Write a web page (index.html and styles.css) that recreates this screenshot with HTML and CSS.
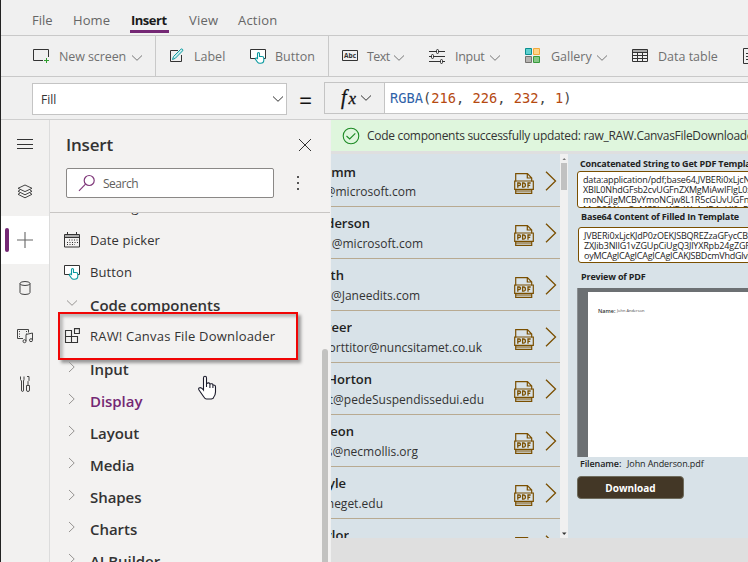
FILE: index.html
```html
<!DOCTYPE html>
<html lang="en">
<head>
<meta charset="utf-8">
<title>Power Apps Studio</title>
<link rel="stylesheet" href="styles.css">
</head>
<body>
<svg class="defs" width="0" height="0">
  <symbol id="down" viewBox="0 0 12 8"><path d="M1 1.5 L6 6.3 L11 1.5" fill="none" stroke="currentColor"/></symbol>
  <symbol id="right" viewBox="0 0 8 12"><path d="M1 1 L6.2 6 L1 11" fill="none" stroke="currentColor"/></symbol>
  <symbol id="tap" viewBox="0 0 18 16">
    <path d="M1.500 1.500 H16.500 V10.500 H1.500 Z" fill="#fff" stroke="#333"/>
    <path d="M8.500 10.500 V5.500 q0-1 1-1 t1 1 V8.500 H13 q1.800 0 1.800 1.800 V12 q0 3.300-3.300 3.300 H10.800 q-1.600 0-2.400-1.300 L6.300 11 q0-1.300 1.200-1 Z" fill="#fff" stroke="#0b9aa0" stroke-width="1.100"/>
  </symbol>
  <symbol id="pdf" viewBox="0 0 20 21">
    <path d="M1.700 8.500 V.7 H13.500 L17.700 5 V8.500 M13.300 1 V5 H17.700 M1.700 16.500 V20.300 H17.700 V16.500" fill="none" stroke="#7a4f00" stroke-width="1.200"/>
    <path d="M.7 8 H19.300 V16.300 H.7 Z M2 18 H17.500" fill="none" stroke="#7a4f00" stroke-width="1.200"/>
    <path d="M3.800 14.800 V10 H5.200 Q6.500 10 6.500 11.300 T5.200 12.600 H4 M8.600 14.200 V10 H9.400 Q11.400 10 11.400 12.100 T9.400 14.200 Z M14 14.800 V10 H16.700 M14 12.300 H16.200" fill="none" stroke="#7a4f00" stroke-width="1.300"/>
  </symbol>
  <symbol id="next" viewBox="0 0 12 20"><path d="M1 .8 L10.500 10 L1 19.200" fill="none" stroke="#7a4f00" stroke-width="1.300"/></symbol>
</svg>
<div class="studio">
  <nav class="menu">
    <a class="m-file">File</a><a class="m-home">Home</a><a class="m-insert active">Insert</a><a class="m-view">View</a><a class="m-action">Action</a>
  </nav>
  <div class="ribbon">
    <div class="tool t-screen">
      <svg width="18" height="16" viewBox="0 0 18 16"><path d="M11 12.500 H1.500 V1.500 H16.500 V9" fill="none" stroke="#333"/><path d="M14.500 10 V15 M12 12.500 H17" stroke="#2f9e2f"/></svg>
      <span>New screen</span><svg class="down" width="12" height="8"><use href="#down"/></svg>
    </div>
    <div class="tool t-label">
      <svg width="16" height="16" viewBox="0 0 16 16"><path d="M9 2.500 H1.500 V13.500 H12.500 V7" fill="none" stroke="#333"/><path d="M3.500 11.500 L4.500 8.500 L11.800 1.300 q1-.8 1.700 0 t0 1.600 L6.300 10.300 Z" fill="#cdeeee" stroke="#0b9aa0"/></svg>
      <span>Label</span>
    </div>
    <div class="tool t-button"><svg width="18" height="16"><use href="#tap"/></svg><span>Button</span></div>
    <div class="tool t-text">
      <svg width="18" height="14" viewBox="0 0 18 14"><path d="M1.500 1.500 H16.500 V11.500 H1.500 Z" fill="none" stroke="#333"/><text x="3" y="9" textLength="12" class="abc">Abc</text></svg>
      <span>Text</span><svg class="down" width="12" height="8"><use href="#down"/></svg>
    </div>
    <div class="tool t-input">
      <svg width="18" height="16" viewBox="0 0 18 16"><path d="M1 3.500 H8 M11 3.500 H17 M1 8.500 H3 M6 8.500 H17 M1 13.500 H12 M15 13.500 H17" stroke="#333"/><g fill="none" stroke="#333"><rect x="8.500" y="1.500" width="2" height="4" rx="1"/><rect x="3.500" y="6.500" width="2" height="4" rx="1"/><rect x="12.500" y="11.500" width="2" height="4" rx="1"/></g></svg>
      <span>Input</span><svg class="down" width="12" height="8"><use href="#down"/></svg>
    </div>
    <div class="tool t-gallery">
      <svg width="16" height="16" viewBox="0 0 16 16"><path d="M.5 .5h6v6h-6z" fill="#5ecfcf" stroke="#0a8f8f"/><path d="M8.500 .5h6v6h-6z" fill="#fdd58a" stroke="#f2a93b"/><path d="M.5 8.500h6v6h-6z" fill="#b5b3b0" stroke="#74726f"/><path d="M8.500 8.500h6v6h-6z" fill="#86c786" stroke="#379a3c"/></svg>
      <span>Gallery</span><svg class="down" width="12" height="8"><use href="#down"/></svg>
    </div>
    <div class="tool t-table">
      <svg width="16" height="14" viewBox="0 0 16 14"><path d="M.5 .5H15.500V3.500H.5Z" fill="#aaa"/><path d="M.5 .5H15.500V12.500H.5Z M.5 3.500H15.500 M.5 6.500H15.500 M.5 9.500H15.500 M5.500 3.500V12.500 M10.500 3.500V12.500" fill="none" stroke="#333"/></svg>
      <span>Data table</span>
    </div>
    <div class="tool t-form"><svg width="14" height="16" viewBox="0 0 14 16"><path d="M.5 .5H13V15.500H.5Z M3 5.500H10 M3 8.500H10 M3 11.500H10" fill="none" stroke="#333"/></svg></div>
  </div>
  <div class="formula">
    <div class="property"><span>Fill</span><svg width="12" height="8"><use href="#down"/></svg></div>
    <div class="equals">=</div>
    <div class="fx"><i>f<b>x</b></i><svg width="12" height="8"><use href="#down"/></svg></div>
    <div class="code"><span class="fn">RGBA</span>(<span class="num">216</span>, <span class="num">226</span>, <span class="num">232</span>, <span class="num">1</span>)</div>
  </div>
  <div class="work">
    <div class="rail">
      <div class="cell"><svg width="16" height="12" viewBox="0 0 16 12"><path d="M0 1.500H16M0 6.500H16M0 10.500H16" stroke="#333"/></svg></div>
      <div class="cell"><svg width="16" height="16" viewBox="0 0 16 16" fill="none" stroke="#444"><path d="M8 1 L15 4.300 L8 7.600 L1 4.300 Z M3 6 L1 7.300 L8 10.800 L15 7.300 L13 6 M3 9 L1 10.300 L8 13.800 L15 10.300 L13 9"/></svg></div>
      <div class="cell on"><svg width="16" height="16" viewBox="0 0 16 16"><path d="M8 0V16M0 8H16" stroke="#666" stroke-width="1.100"/></svg></div>
      <div class="cell"><svg width="12" height="14" viewBox="0 0 12 14" fill="none" stroke="#444"><ellipse cx="6" cy="2.500" rx="5" ry="2"/><path d="M1 2.500V11.500Q1 13.500 6 13.500T11 11.500V2.500"/></svg></div>
      <div class="cell"><svg width="18" height="16" viewBox="0 0 18 16" fill="none" stroke="#444"><path d="M7 10.500H1.500V1.500H12.500V4.500"/><path d="M3.500 3V10M10.500 3V6" stroke-dasharray="1 1.500"/><path d="M10 13V6.500L16.500 5V12"/><circle cx="8.500" cy="13.200" r="1.500"/><circle cx="15" cy="12.200" r="1.500"/></svg></div>
      <div class="cell"><svg width="12" height="18" viewBox="0 0 12 18" fill="none" stroke="#444"><path d="M1.500 1.500V4.500L2.500 6V15q0 1.500 1 1.500t1-1.500V6L5 4.500V1.500M8 1.500h2v4l-1 1v4M7.500 10.500h3v4.500q0 1.500-1.500 1.500t-1.500-1.500z"/></svg></div>
    </div>
    <aside class="panel">
      <div class="head"><h2>Insert</h2><svg width="14" height="14" viewBox="0 0 14 14"><path d="M1 1L13 13M13 1L1 13" stroke="#333"/></svg></div>
      <div class="find">
        <div class="search"><svg width="18" height="18" viewBox="0 0 18 18" fill="none" stroke="#80397b" stroke-width="1.200"><circle cx="11.200" cy="6.500" r="5"/><path d="M7.500 10.200L1 16.800"/></svg><span>Search</span></div>
        <svg width="4" height="16" viewBox="0 0 4 16" fill="#555"><path d="M1 1h2v2H1zM1 7h2v2H1zM1 13h2v2H1z"/></svg>
      </div>
      <div class="tree">
        <div class="item ghost"><span>Rectangle</span></div>
        <div class="item"><svg width="16" height="16" viewBox="0 0 16 16"><path d="M.5 2.500H15.500V5H.5Z" fill="#aaa"/><path d="M.5 2.500H15.500V15H.5ZM.5 5.500H15.500M3.500 0V3M12.500 0V3" fill="none" stroke="#333"/><path d="M5 8H14M3 10.500H14M3 12.500H11" stroke="#333" stroke-dasharray="1 1.500"/></svg><span class="w-date">Date picker</span></div>
        <div class="item"><svg width="18" height="16"><use href="#tap"/></svg><span class="w-button">Button</span></div>
        <div class="group open"><svg width="12" height="8"><use href="#down"/></svg><span class="w-code">Code components</span></div>
        <div class="item"><svg width="16" height="16" viewBox="0 0 16 16" fill="none" stroke="#333" stroke-width="1.100"><path d="M1.500 2.500H7.500V14.500H1.500ZM1.500 8.500H13.500V14.500H7.500M10.500 .6H15.400V5.500H10.500Z"/></svg><span class="w-raw">RAW! Canvas File Downloader</span></div>
        <div class="group"><svg width="8" height="12"><use href="#right"/></svg><span>Input</span></div>
        <div class="group hot"><svg width="8" height="12"><use href="#right"/></svg><span>Display</span></div>
        <div class="group"><svg width="8" height="12"><use href="#right"/></svg><span>Layout</span></div>
        <div class="group"><svg width="8" height="12"><use href="#right"/></svg><span>Media</span></div>
        <div class="group"><svg width="8" height="12"><use href="#right"/></svg><span>Shapes</span></div>
        <div class="group"><svg width="8" height="12"><use href="#right"/></svg><span>Charts</span></div>
        <div class="group"><svg width="8" height="12"><use href="#right"/></svg><span>AI Builder</span></div>
      </div>
      <div class="thumb"></div>
      <div class="callout"></div>
      <svg class="hand" width="20" height="26" viewBox="0 0 20 26"><path d="M6.500 14V3q0-1.800 1.500-1.800T9.500 3V8.500q2.800-1.500 3.500.5 2.500-.8 3 1 2.500-.3 2.500 2V17q0 3-2 5.500 0 1.500-4 1.500h-3q-1.500 0-3-2.500L2 15q-1-2 .8-2.300T6.500 15ZM9.500 8V12M12.900 9V13M15.900 10V13" fill="#fff" stroke="#1b1b2b" stroke-width="1.100"/></svg>
    </aside>
    <main class="stage">
      <div class="banner"><svg width="18" height="18" viewBox="0 0 18 18" fill="none" stroke="#1d8a25" stroke-width="1.100"><circle cx="9" cy="9" r="7.800"/><path d="M4.500 9L7.700 12L13.300 6.300"/></svg><span>Code components successfully updated: raw_RAW.CanvasFileDownloader</span></div>
      <div class="app">
        <div class="gallery">
          <div class="row"><div class="who"><b>Grimm</b><span>someone@microsoft.com</span></div><svg class="pdf" width="20" height="21"><use href="#pdf"/></svg><svg width="12" height="20"><use href="#next"/></svg></div>
          <div class="row"><div class="who"><b>John Anderson</b><span>@microsoft.com</span></div><svg class="pdf" width="20" height="21"><use href="#pdf"/></svg><svg width="12" height="20"><use href="#next"/></svg></div>
          <div class="row"><div class="who"><b>Smith</b><span>@Janeedits.com</span></div><svg class="pdf" width="20" height="21"><use href="#pdf"/></svg><svg width="12" height="20"><use href="#next"/></svg></div>
          <div class="row"><div class="who"><b>Greer</b><span>porttitor@nuncsitamet.co.uk</span></div><svg class="pdf" width="20" height="21"><use href="#pdf"/></svg><svg width="12" height="20"><use href="#next"/></svg></div>
          <div class="row"><div class="who"><b>Horton</b><span>et@pedeSuspendissedui.edu</span></div><svg class="pdf" width="20" height="21"><use href="#pdf"/></svg><svg width="12" height="20"><use href="#next"/></svg></div>
          <div class="row"><div class="who"><b>Deleon</b><span>s@necmollis.org</span></div><svg class="pdf" width="20" height="21"><use href="#pdf"/></svg><svg width="12" height="20"><use href="#next"/></svg></div>
          <div class="row"><div class="who"><b>Kyle</b><span>neget.edu</span></div><svg class="pdf" width="20" height="21"><use href="#pdf"/></svg><svg width="12" height="20"><use href="#next"/></svg></div>
          <div class="row"><div class="who"><b>Taylor</b><span></span></div><svg class="pdf" width="20" height="21"><use href="#pdf"/></svg><svg width="12" height="20"><use href="#next"/></svg></div>
        </div>
        <div class="bar"><svg width="8" height="9" viewBox="0 0 8 9"><path d="M2.500 6L4.200 4L6 6Z" fill="#777"/></svg><div class="grip"></div><svg class="end" width="8" height="9" viewBox="0 0 8 9"><path d="M2 3.500H6.500L4.200 6Z" fill="#333"/></svg></div>
        <div class="detail">
          <h3 class="h-concat">Concatenated String to Get PDF Template</h3>
          <div class="area first"><p>data:application/pdf;base64,JVBERi0xLjcN</p><p>XBlL0NhdGFsb2cvUGFnZXMgMiAwIFIgL0xh</p><p>moNCjIgMCBvYmoNCjw8L1R5cGUvUGFnZX</p><p>MvQ291bnQgMS9LaWRzWyAzIDAgUl0gPj4N</p></div>
          <h3 class="h-base">Base64 Content of Filled In Template</h3>
          <div class="area second"><p>JVBERi0xLjcKJdP0zOEKJSBQREZzaGFycCBW</p><p>ZXJib3NlIG1vZGUpCiUgQ3JlYXRpb24gZGF0</p><p class="tight">oyMCAgICAgICAgICAgICAKJSBDcmVhdGlvb</p></div>
          <h3 class="h-prev">Preview of PDF</h3>
          <div class="viewer"><div class="page"><b>Name:</b><span>John Anderson</span></div></div>
          <div class="file"><b>Filename:</b><span>John Anderson.pdf</span></div>
          <button class="dl">Download</button>
        </div>
      </div>
    </main>
  </div>
</div>
</body>
</html>
```
FILE: styles.css
```css
* { box-sizing: border-box; margin: 0; padding: 0; }
body { width: 748px; height: 562px; overflow: hidden; background: #f0f0f0; font-family: "Open Sans", "Noto Sans", sans-serif; color: #333; }
svg { display: block; flex: none; }
.defs { position: absolute; }
.studio { width: 748px; height: 562px; border-left: 1px solid #222; display: flex; flex-direction: column; overflow: hidden; white-space: nowrap; }

.menu { height: 36px; flex: none; border-bottom: 1px solid #c9c9c9; display: flex; padding-left: 31px; font-size: 13px; color: #666; }
.menu a { height: 33px; line-height: 17px; padding-top: 12px; }
.m-file { width: 41px; }
.m-home { width: 57px; letter-spacing: .1px; }
.m-insert { width: 39px; margin-right: 20px; padding-left: 1px; letter-spacing: -.5px; }
.m-view { width: 49px; letter-spacing: .2px; }
.m-action { letter-spacing: .2px; }
.menu .active { color: #1b1b1b; font-weight: 700; border-bottom: 3px solid #742774; }

.ribbon { height: 41px; flex: none; border-bottom: 1px solid #c9c9c9; display: flex; font-size: 12.5px; color: #707070; }
.tool { display: flex; align-items: center; flex: none; height: 40px; }
.tool .down { margin-top: 3px; color: #777; }
.t-screen { width: 155px; padding-left: 31px; border-right: 1px solid #c9c9c9; }
.t-screen span { width: 72px; margin-left: 9px; letter-spacing: -.1px; }
.t-label { width: 92px; padding-left: 13px; }
.t-label span { margin-left: 9px; }
.t-button { width: 81px; padding-left: 1px; border-right: 1px solid #c9c9c9; }
.t-button span { margin-left: 8px; }
.t-text { width: 99px; padding-left: 12px; }
.t-text span { width: 26px; margin-left: 8px; letter-spacing: -.6px; }
.t-input { width: 95px; }
.t-input span { width: 34px; margin-left: 9px; letter-spacing: -.3px; }
.t-gallery { width: 108px; padding-left: 2px; }
.t-gallery span { width: 45px; margin-left: 10px; }
.t-table { width: 111px; padding-left: 1px; }
.t-table span { margin-left: 10px; }
.t-form { padding-left: 1px; }
.abc { font: 700 6.500px "Open Sans", sans-serif; fill: #333; }

.formula { height: 43px; flex: none; border-bottom: 1px solid #cfcfcf; display: flex; }
.property { width: 255px; height: 32px; margin: 6px 0 0 31px; border: 1px solid #c4c4c4; background: #fff; display: flex; align-items: center; justify-content: space-between; padding: 0 2px 0 8px; font-size: 12px; }
.equals { width: 37px; padding: 7px 0 0 12px; font-size: 23px; line-height: 32px; color: #111; }
.fx { width: 60px; height: 32px; margin-top: 5px; border: 1px solid #c4c4c4; border-right: 0; display: flex; align-items: center; padding-left: 16px; }
.fx i { width: 19px; font: italic 400 20px/28px "Liberation Serif", serif; color: #111; -webkit-text-stroke: .3px #111; }
.fx b { font-size: 17px; font-weight: 400; margin-left: 2px; }
.code { flex: 1; height: 32px; margin-top: 5px; background: #fff; border: 1px solid #c4c4c4; border-right: 0; padding-left: 5px; font: 13.700px/30px "DejaVu Sans Mono", monospace; color: #444; }
.fn { color: #2f62a8; }
.num { color: #b5490f; }

.work { flex: 1; min-height: 0; display: flex; }
.rail { width: 49px; flex: none; border-right: 1px solid #dcdcdc; background: #f2f1f0; }
.cell { height: 48px; display: flex; align-items: center; justify-content: center; }
.cell.on { background: #fff; position: relative; }
.cell.on::before { content: ""; position: absolute; left: 4px; top: 12px; width: 4px; height: 24px; border-radius: 2px; background: #742774; }

.panel { width: 280px; flex: none; background: #f3f2f1; position: relative; overflow: hidden; display: flex; flex-direction: column; }
.head { height: 48px; display: flex; align-items: center; justify-content: space-between; padding: 2px 18px 0 16px; }
.head h2 { font-size: 17px; font-weight: 600; line-height: 24px; letter-spacing: -.2px; }
.find { height: 45px; display: flex; align-items: center; padding: 0 30px 15px 16px; justify-content: space-between; border-bottom: 1px solid #c8c6c4; }
.search { width: 208px; height: 30px; border: 1px solid #8a8886; border-radius: 2px; background: #fff; display: flex; align-items: center; padding-left: 11px; font-size: 12px; color: #605e5c; }
.search span { margin-left: 7px; letter-spacing: -.5px; padding-top: 1px; }
.tree { flex: 1; min-height: 0; overflow: hidden; }
.item, .group { height: 32px; display: flex; align-items: center; padding-left: 14px; }
.item.ghost { margin-top: -21px; }
.item.ghost span { margin: -2px 0 0 26px; }
.item { font-size: 13px; }
.item svg { margin-right: 10px; }
.item svg[width="18"] { margin: 0 9px 0 -1px; }
.group { font-size: 15px; font-weight: 600; letter-spacing: -.05px; padding-left: 18px; padding-top: 2px; }
.group svg { color: #979593; margin: -4px 14px 0 0; }
.group.open svg { margin: -4px 12px 0 -2px; }
.group.hot { color: #742774; }
.w-date, .w-button { letter-spacing: .1px; }
.w-raw { letter-spacing: .2px; }
.thumb { position: absolute; left: 272px; top: 229px; width: 6px; height: 240px; border-radius: 3px; background: #c2c2c0; }
.callout { position: absolute; left: 8px; top: 192px; width: 240px; height: 48px; border: 2px solid #f00505; box-shadow: 3px 3px 3px #999, inset 3px 3px 3px #bbb; }
.hand { position: absolute; left: 147px; top: 255px; }

.stage { flex: 1; min-width: 0; margin-left: 1px; background: #dfdfdf; overflow: hidden; }
.banner { height: 31px; margin-bottom: 3px; background: #dff6dd; display: flex; align-items: center; padding-left: 11px; font-size: 12px; }
.banner span { margin-left: 7px; letter-spacing: -.3px; }
.app { height: 384px; display: flex; background: #d8e2e8; overflow: hidden; }
.gallery { width: 229px; flex: none; overflow: hidden; }
.row { height: 52px; border-bottom: 1px solid #b8aa91; display: flex; padding-top: 11px; }
.row:first-child { height: 53px; }
.row:first-child .pdf { margin-top: 8px; }
.row:first-child > svg:last-child { margin-top: 6px; }
.row .pdf { margin: 7px 11px 0 1px; }
.row > svg:last-child { margin-top: 5px; }
.who { width: 182px; height: 42px; flex: none; }
.who b, .who span { display: flex; justify-content: flex-end; overflow: hidden; }
.who b { font-size: 13px; line-height: 20px; font-weight: 600; margin-top: -4px; color: #222; }
.who span { font-size: 12px; line-height: 20px; }
.row:first-child .who b { margin-top: -3px; }
.row:nth-child(n+2) .who b { margin-top: -5px; }
.row:nth-child(n+2) .who span { margin-top: 1px; }
.row:nth-child(1) b { width: 25px; } .row:nth-child(1) span { width: 85px; }
.row:nth-child(2) b { width: 39px; } .row:nth-child(2) span { width: 92px; }
.row:nth-child(3) b { width: 13px; } .row:nth-child(3) span { width: 89px; }
.row:nth-child(4) b { width: 21px; } .row:nth-child(4) span { width: 151px; }
.row:nth-child(5) b { width: 41px; } .row:nth-child(5) span { width: 153px; }
.row:nth-child(6) b { width: 23px; } .row:nth-child(6) span { width: 87px; }
.row:nth-child(7) b { width: 15px; } .row:nth-child(7) span { width: 52px; }
.row:nth-child(8) b { width: 18px; }
.bar { width: 8px; flex: none; background: #f0f0f0; display: flex; flex-direction: column; }
.grip { width: 6px; height: 27px; margin-left: 1px; background: #c1c1c1; }
.bar .end { margin-top: auto; }
.detail { width: 180px; flex: none; overflow: hidden; padding-left: 9px; }
.detail h3 { font-size: 9px; line-height: 12px; font-weight: 700; letter-spacing: -.17px; color: #222; padding-left: 4px; }
.h-concat { margin: 4px 0 1px -1px; }
.area { width: 300px; border: 1px solid #7a4f00; border-radius: 3px; background: #fff; font-size: 9px; line-height: 10px; letter-spacing: -.17px; overflow: hidden; padding: 3px 0 0 6px; color: #222; }
.area.first { height: 37px; padding-left: 5px; }
.area.second { height: 36px; margin-left: 1px; padding-left: 5px; }
.tight { letter-spacing: -.25px; }
.h-base { margin: 3px 0 4px; }
.h-prev { margin: 8px 0 5px; }
.viewer { height: 169px; background: #6c7073; border-left: 1px solid #8b8f92; padding: 4px 0 0 10px; }
.page { height: 165px; background: #fff; padding: 13px 0 0 10px; display: flex; font-size: 5.500px; line-height: 12px; }
.page b { width: 19px; font-weight: 600; }
.page span { font-size: 4px; color: #444; }
.file { height: 19px; display: flex; font-size: 9px; line-height: 14px; letter-spacing: -.1px; padding-left: 3px; color: #222; }
.file b { width: 47px; font-weight: 600; }
.dl { width: 107px; height: 23px; border: 1px solid #6e6b5c; border-radius: 4px; background: #433726; color: #fff; font: 700 10px/20px "Open Sans", sans-serif; display: block; }
```
